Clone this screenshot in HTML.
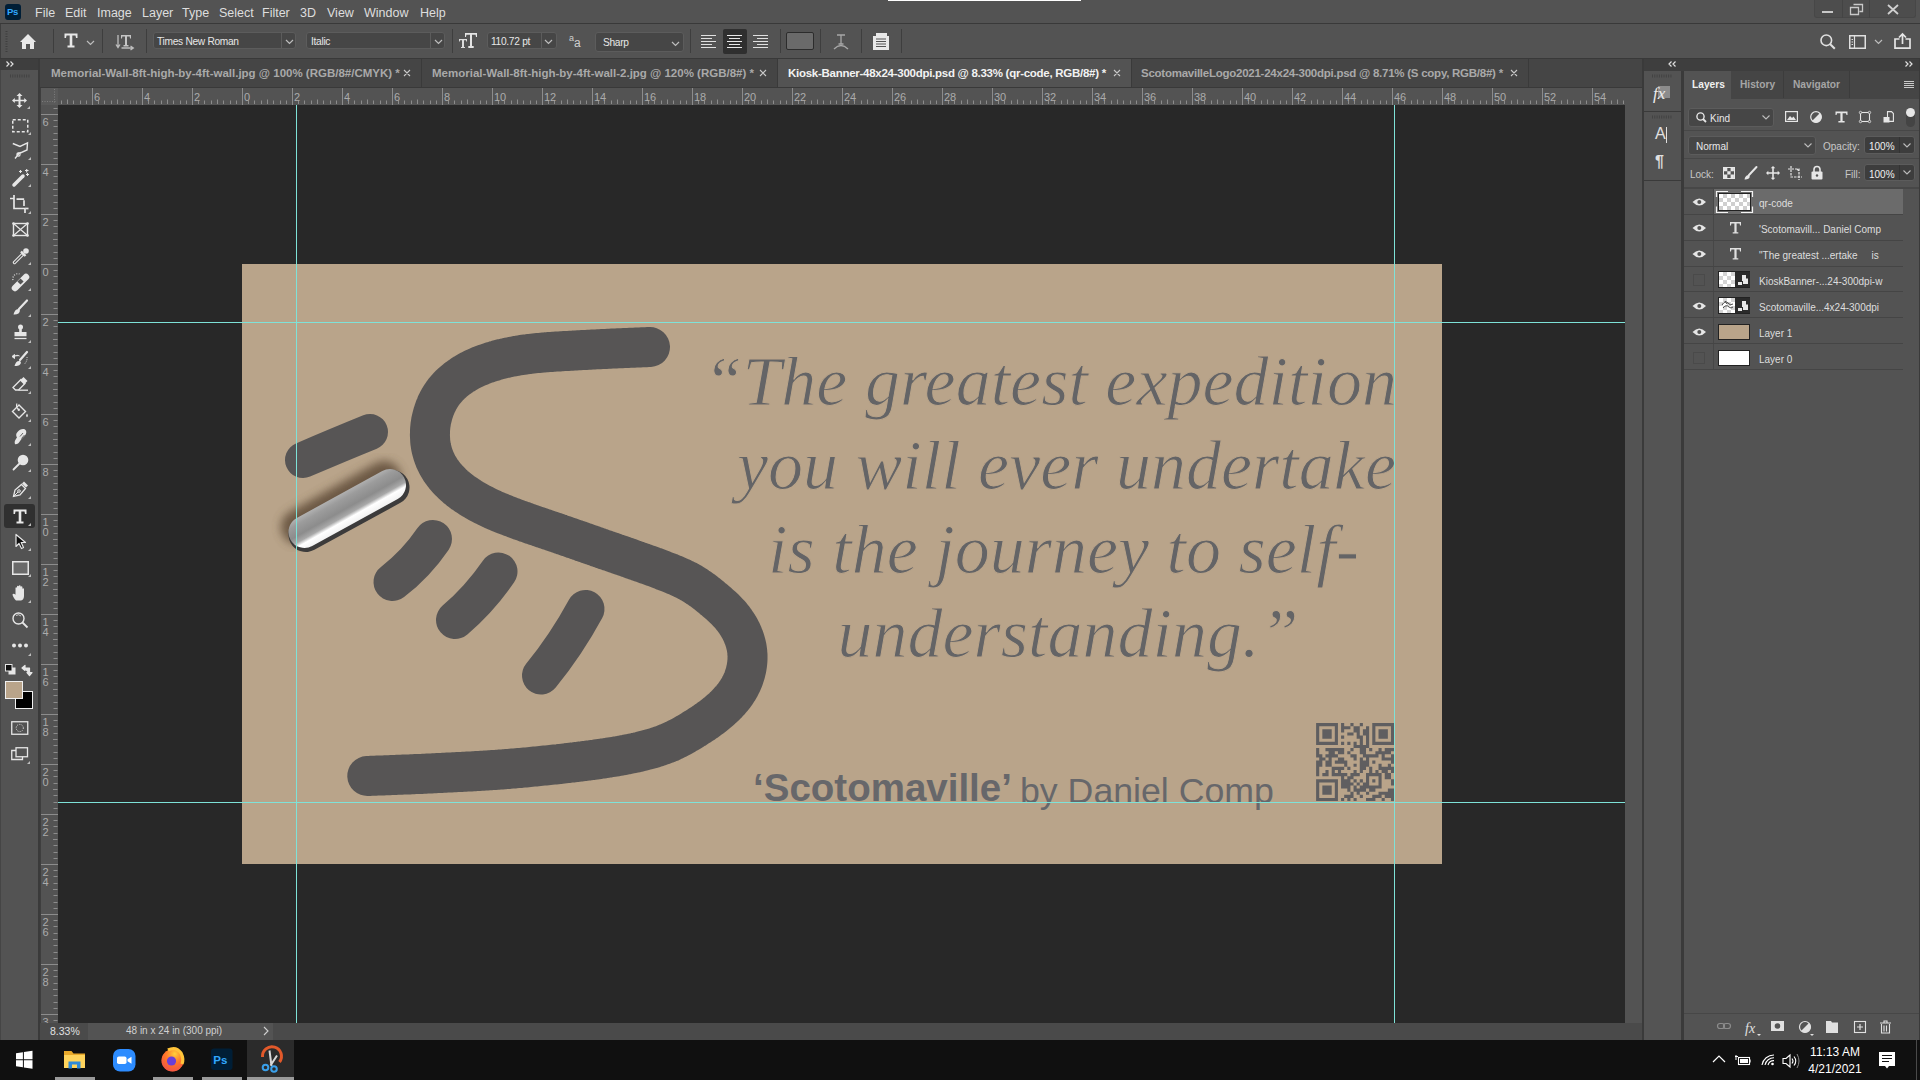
<!DOCTYPE html>
<html><head><meta charset="utf-8">
<style>
*{margin:0;padding:0;box-sizing:border-box}
html,body{width:1920px;height:1080px;overflow:hidden;background:#535353;font-family:"Liberation Sans",sans-serif;color:#d8d8d8;position:relative}
.a{position:absolute}
svg{position:absolute;overflow:visible}
.menu span{position:absolute;top:6px;font-size:12.5px;color:#dedede;white-space:nowrap}
.sep{position:absolute;width:1px;background:#3e3e3e}
.box{position:absolute;background:#464646;border:1px solid #5c5c5c;border-radius:3px}
.otxt{font-size:10.2px;color:#e6e6e6;white-space:nowrap;letter-spacing:-0.3px}
.tab{position:absolute;top:59px;height:28px;font-size:11.5px;font-weight:bold;white-space:nowrap}
.tab span{position:absolute;top:7.7px}
.ptab{top:79px;font-size:10.2px;font-weight:bold;white-space:nowrap}
.ptxt{font-size:10px;white-space:nowrap}
.lname{font-size:10px;color:#dedede;white-space:nowrap}
.quote{font-family:"Liberation Serif",serif;font-style:italic;font-size:70px;line-height:84px;color:#646466;white-space:nowrap;-webkit-text-stroke:1px #b9a48a}
.byline{font-family:"Liberation Sans",sans-serif;font-size:37px;line-height:48px;color:#67676a;white-space:nowrap}
</style></head><body>
<!-- MENU BAR -->
<div class="a" style="left:0;top:0;width:1920px;height:23px;background:#535353"></div>
<div class="a" style="left:888px;top:0;width:193px;height:1px;background:#fff"></div>
<div class="a" style="left:0;top:23px;width:1920px;height:1px;background:#393939"></div>
<div class="a" style="left:5px;top:4px;width:16px;height:16px;background:#001e36;border-radius:3px"></div>
<div class="a" style="left:7px;top:6px;font-size:9.5px;font-weight:bold;color:#31a8ff;letter-spacing:-0.3px">Ps</div>
<div class="menu">
<span style="left:35px">File</span><span style="left:65px">Edit</span><span style="left:97px">Image</span><span style="left:142px">Layer</span><span style="left:182px">Type</span><span style="left:219px">Select</span><span style="left:262px">Filter</span><span style="left:300px">3D</span><span style="left:327px">View</span><span style="left:364px">Window</span><span style="left:420px">Help</span>
</div>
<!-- window controls -->
<div class="a" style="left:1814px;top:0;width:102px;height:18px;background:#4d4d4d;border:1px solid #474747;border-top:0;border-radius:0 0 3px 3px"></div>
<div class="a" style="left:1842px;top:0;width:1px;height:18px;background:#444"></div>
<div class="a" style="left:1869px;top:0;width:1px;height:18px;background:#444"></div>
<div class="a" style="left:1822px;top:11px;width:11px;height:2px;background:#c8c8c8"></div>
<svg style="left:1850px;top:4px" width="13" height="11"><path d="M3.5 0.5h9v7h-3M0.5 3.5h8v7h-8z" fill="none" stroke="#c8c8c8" stroke-width="1.3"/></svg>
<svg style="left:1887px;top:4px" width="12" height="11"><path d="M1 1L11 10M11 1L1 10" stroke="#d0d0d0" stroke-width="1.8"/></svg>

<!-- OPTIONS BAR -->
<div class="a" style="left:0;top:24px;width:1920px;height:34px;background:#535353"></div>
<div class="a" style="left:0;top:24px;width:1px;height:34px;background:#3e3e3e"></div>
<div class="a" style="left:0;top:58px;width:1920px;height:1px;background:#393939"></div>
<svg style="left:5px;top:31px" width="3" height="21"><path d="M1.5 0V21" stroke="#3e3e3e" stroke-width="2" stroke-dasharray="1 1.5"/></svg>
<div class="sep" style="left:53px;top:29px;height:24px"></div>
<div class="sep" style="left:102px;top:29px;height:24px"></div>
<div class="sep" style="left:146px;top:29px;height:24px"></div>
<div class="sep" style="left:452px;top:29px;height:24px"></div>
<div class="sep" style="left:690px;top:29px;height:24px"></div>
<div class="sep" style="left:780px;top:29px;height:24px"></div>
<div class="sep" style="left:820px;top:29px;height:24px"></div>
<div class="sep" style="left:861px;top:29px;height:24px"></div>
<div class="sep" style="left:901px;top:29px;height:24px"></div>
<!-- home -->
<svg style="left:20px;top:34px" width="16" height="15"><path d="M8 0L16 8H14V15H10V10H6V15H2V8H0Z" fill="#e8e8e8"/></svg>
<!-- T tool -->
<svg style="left:64px;top:33px" width="14" height="15"><path d="M0.5 0.5H13.5V5H12L11.5 2.5H8.3V12.6H10.5V14.5H3.5V12.6H5.7V2.5H2.5L2 5H0.5Z" fill="#e8e8e8"/></svg>
<svg style="left:86px;top:40px" width="9" height="6"><path d="M1 1L4.5 4.5L8 1" fill="none" stroke="#bdbdbd" stroke-width="1.2"/></svg>
<!-- orientation icon -->
<svg style="left:116px;top:34px" width="19" height="17"><path d="M2 1V13M0 10.5L2 13.5L4 10.5" fill="none" stroke="#bdbdbd" stroke-width="1.3"/><path d="M5 1H15V4.5H14L13.7 2.5H11V11H12.5V12.5H7.5V11H9V2.5H6.3L6 4.5H5Z" fill="#c4c4c4"/><path d="M5.5 14H17M14.5 12L17.3 14L14.5 16" fill="none" stroke="#bdbdbd" stroke-width="1.3"/></svg>
<!-- font family -->
<div class="box" style="left:153px;top:32px;width:143px;height:17px"></div>
<div class="a" style="left:281px;top:33px;width:1px;height:15px;background:#5c5c5c"></div>
<div class="a otxt" style="left:157px;top:36px">Times New Roman</div>
<svg style="left:285px;top:39px" width="9" height="6"><path d="M1 1L4.5 4.5L8 1" fill="none" stroke="#bdbdbd" stroke-width="1.2"/></svg>
<!-- style -->
<div class="box" style="left:306px;top:32px;width:139px;height:17px"></div>
<div class="a" style="left:430px;top:33px;width:1px;height:15px;background:#5c5c5c"></div>
<div class="a otxt" style="left:311px;top:36px">Italic</div>
<svg style="left:434px;top:39px" width="9" height="6"><path d="M1 1L4.5 4.5L8 1" fill="none" stroke="#bdbdbd" stroke-width="1.2"/></svg>
<!-- size icon -->
<svg style="left:459px;top:33px" width="18" height="15"><path d="M0 6H8V8.5H7.2L7 7.2H5V14H6V15H2V14H3V7.2H1L0.8 8.5H0Z" fill="#dcdcdc"/><path d="M6 0H18V4H17L16.6 1.8H13V13H14.7V15H9.3V13H11V1.8H7.4L7 4H6Z" fill="#e4e4e4"/></svg>
<div class="box" style="left:487px;top:32px;width:70px;height:17px"></div>
<div class="a" style="left:541px;top:33px;width:1px;height:15px;background:#5c5c5c"></div>
<div class="a otxt" style="left:491px;top:36px">110.72 pt</div>
<svg style="left:544px;top:39px" width="9" height="6"><path d="M1 1L4.5 4.5L8 1" fill="none" stroke="#bdbdbd" stroke-width="1.2"/></svg>
<!-- aa -->
<div class="a" style="left:569px;top:33px;font-size:9px;color:#cfcfcf">a</div>
<div class="a" style="left:574px;top:36px;font-size:12px;color:#cfcfcf">a</div>
<div class="box" style="left:595px;top:32px;width:89px;height:20px"></div>
<div class="a otxt" style="left:603px;top:37px">Sharp</div>
<svg style="left:671px;top:41px" width="9" height="6"><path d="M1 1L4.5 4.5L8 1" fill="none" stroke="#bdbdbd" stroke-width="1.2"/></svg>
<!-- align -->
<svg style="left:701px;top:35px" width="16" height="13"><path d="M0 0.5H15M0 3.5H11M0 6.5H15M0 9.5H11M0 12.5H15" stroke="#e0e0e0" stroke-width="1.2"/></svg>
<div class="a" style="left:723px;top:29px;width:24px;height:25px;background:#2f2f2f;border-radius:2px"></div>
<svg style="left:727px;top:35px" width="16" height="13"><path d="M0 0.5H15M2 3.5H13M0 6.5H15M2 9.5H13M0 12.5H15" stroke="#e8e8e8" stroke-width="1.2"/></svg>
<svg style="left:753px;top:35px" width="16" height="13"><path d="M0 0.5H15M4 3.5H15M0 6.5H15M4 9.5H15M0 12.5H15" stroke="#e0e0e0" stroke-width="1.2"/></svg>
<div class="a" style="left:786px;top:32px;width:28px;height:18px;background:#6a6a6a;border:1px solid #2c2c2c;border-radius:2px"></div>
<!-- warp -->
<svg style="left:833px;top:34px" width="16" height="16"><path d="M4 1H12M8 1V10M5.5 10H10.5" fill="none" stroke="#a8a8a8" stroke-width="1.3"/><path d="M1 15Q8 8 15 15" fill="none" stroke="#a8a8a8" stroke-width="1.3"/></svg>
<!-- panels icon -->
<svg style="left:873px;top:33px" width="17" height="17"><path d="M0 3H3V0H14V3H16V17H0Z" fill="#e8e8e8"/><path d="M3 6H13M3 8.5H13M3 11H13M3 13.5H13" stroke="#535353" stroke-width="1.1"/></svg>
<!-- right icons -->
<svg style="left:1820px;top:34px" width="16" height="16"><circle cx="6.3" cy="6.3" r="5.3" fill="none" stroke="#e0e0e0" stroke-width="1.6"/><path d="M10 10L14.8 14.8" stroke="#e0e0e0" stroke-width="2"/></svg>
<svg style="left:1849px;top:35px" width="17" height="14"><rect x="0.75" y="0.75" width="15.5" height="12.5" fill="none" stroke="#e0e0e0" stroke-width="1.5"/><path d="M5.5 1V13" stroke="#e0e0e0" stroke-width="1.2"/><path d="M2.5 4.5H4M2.5 7H4M2.5 9.5H4" stroke="#e0e0e0" stroke-width="1"/></svg>
<svg style="left:1874px;top:39px" width="9" height="6"><path d="M1 1L4.5 4.5L8 1" fill="none" stroke="#bdbdbd" stroke-width="1.2"/></svg>
<svg style="left:1894px;top:33px" width="17" height="16"><path d="M5.5 6H1V15.2H16V6H11.5" fill="none" stroke="#e6e6e6" stroke-width="1.7"/><path d="M8.5 11V1.5M5 4.5L8.5 1L12 4.5" fill="none" stroke="#e6e6e6" stroke-width="1.7"/></svg>
<!-- LEFT TOOLS -->
<div class="a" style="left:0;top:59px;width:38px;height:11px;background:#3e3e3e"></div>
<svg style="left:6px;top:61px" width="8" height="6"><path d="M0.5 0.5L3 3L0.5 5.5M4.5 0.5L7 3L4.5 5.5" fill="none" stroke="#e0e0e0" stroke-width="1.2"/></svg>
<div class="a" style="left:0;top:70px;width:38px;height:970px;background:#535353"></div>
<div class="a" style="left:0;top:70px;width:1px;height:970px;background:#454545"></div>
<div class="a" style="left:38px;top:59px;width:2px;height:981px;background:#3a3a3a"></div>
<svg style="left:10px;top:74px" width="20" height="4"><path d="M0 2H20" stroke="#434343" stroke-width="3" stroke-dasharray="1 1.3"/></svg>
<g>
<!-- move -->
<svg style="left:12px;top:93px" width="20" height="16"><path d="M7.5 0L10.5 3H8.5V6.8H12.2V5L15 7.5L12.2 10V8.2H8.5V12H10.5L7.5 15L4.5 12H6.5V8.2H2.8V10L0 7.5L2.8 5V6.8H6.5V3H4.5Z" fill="#e6e6e6"/><path d="M18 13V16H15Z" fill="#bdbdbd"/></svg>
<!-- marquee -->
<svg style="left:12px;top:119px" width="20" height="16"><rect x="0.75" y="0.75" width="15" height="12" fill="none" stroke="#e6e6e6" stroke-width="1.5" stroke-dasharray="3 2"/><path d="M19 13V16H16Z" fill="#bdbdbd"/></svg>
<!-- lasso -->
<svg style="left:12px;top:142px" width="20" height="18"><path d="M0.8 1.5L8 4.5L15.5 0.8L15 8L7 11.5L3 16.5M9 10.5L5 12" fill="none" stroke="#e6e6e6" stroke-width="1.4"/><circle cx="6.5" cy="12.5" r="1.6" fill="none" stroke="#e6e6e6" stroke-width="1.2"/><path d="M19 15V18H16Z" fill="#bdbdbd"/></svg>
<!-- wand -->
<svg style="left:12px;top:169px" width="20" height="18"><path d="M2 16L11 7" stroke="#e6e6e6" stroke-width="3.5" stroke-linecap="round"/><path d="M7 2.5H10M8.5 1V4M13 1.5H16.5M14.7 0V3.5M14 5.5H17M15.5 4V7" stroke="#e6e6e6" stroke-width="1.1"/><path d="M19 15V18H16Z" fill="#bdbdbd"/></svg>
<!-- crop -->
<svg style="left:10px;top:195px" width="22" height="19"><path d="M0 3.5H4.8M4 0V13.5H15V18M14 5.2V11M6.5 4.2H13.3V5" fill="none" stroke="#e6e6e6" stroke-width="1.7"/><path d="M15.5 13.5H18.5" stroke="#e6e6e6" stroke-width="1.7"/><path d="M21 16V19H18Z" fill="#bdbdbd"/></svg>
<!-- frame -->
<svg style="left:12px;top:222px" width="18" height="16"><rect x="1.5" y="1.5" width="14" height="12" fill="none" stroke="#e6e6e6" stroke-width="1.4"/><path d="M1.5 1.5L15.5 13.5M15.5 1.5L1.5 13.5" stroke="#e6e6e6" stroke-width="1.2"/><circle cx="1.5" cy="1.5" r="1.3" fill="#e6e6e6"/><circle cx="15.5" cy="1.5" r="1.3" fill="#e6e6e6"/><circle cx="1.5" cy="13.5" r="1.3" fill="#e6e6e6"/><circle cx="15.5" cy="13.5" r="1.3" fill="#e6e6e6"/></svg>
<!-- eyedropper -->
<svg style="left:12px;top:247px" width="20" height="18"><path d="M2.5 15.5L10.5 7.5" stroke="#e6e6e6" stroke-width="3.4" stroke-linecap="round"/><path d="M2.5 15.5L10 8" stroke="#535353" stroke-width="1.2" stroke-linecap="round"/><path d="M9 4.5L13.5 9" stroke="#e6e6e6" stroke-width="2.4"/><circle cx="14" cy="4" r="2.8" fill="#e6e6e6"/><path d="M19 15V18H16Z" fill="#bdbdbd"/></svg>
<!-- healing -->
<svg style="left:11px;top:272px" width="21" height="19"><path d="M4 16L15 5" stroke="#e6e6e6" stroke-width="6.5" stroke-linecap="round"/><rect x="7.3" y="7.3" width="4.4" height="4.4" fill="#535353" transform="rotate(45 9.5 9.5)"/><path d="M2 8A5 5 0 0 1 8.5 2" fill="none" stroke="#e6e6e6" stroke-width="1.2" stroke-dasharray="1 1.5"/><path d="M20 16V19H17Z" fill="#bdbdbd"/></svg>
<!-- brush -->
<svg style="left:12px;top:299px" width="20" height="18"><path d="M7 10L15 1.5" stroke="#e6e6e6" stroke-width="2.2" stroke-linecap="round"/><path d="M1.5 15.5C2.5 12 4 9.5 7 10C8.5 11 8 13 6.5 14.5C5 15.5 3 15.8 1.5 15.5Z" fill="#e6e6e6"/><path d="M19 15V18H16Z" fill="#bdbdbd"/></svg>
<!-- stamp -->
<svg style="left:12px;top:324px" width="20" height="19"><circle cx="8.5" cy="3" r="2.5" fill="#e6e6e6"/><path d="M7.2 4H9.8V8H14.5V12.2H2.5V8H7.2Z" fill="#e6e6e6"/><path d="M2.5 14.5H14.5" stroke="#e6e6e6" stroke-width="1.3"/><path d="M19 16V19H16Z" fill="#bdbdbd"/></svg>
<!-- history brush -->
<svg style="left:11px;top:350px" width="21" height="19"><path d="M9 10L16 2" stroke="#e6e6e6" stroke-width="2.2" stroke-linecap="round"/><path d="M3.5 16C4.5 12.5 6 10.5 9 11C10.5 12 10 14 8.5 15C7 16 5 16.2 3.5 16Z" fill="#e6e6e6"/><path d="M1 6.5L3.5 4.5V8.5ZM3 6.5C5 5 7 5 8.5 6" fill="#e6e6e6" stroke="#e6e6e6" stroke-width="1"/><path d="M16 7Q16.5 11 13.5 14" fill="none" stroke="#e6e6e6" stroke-width="1" stroke-dasharray="1 1.3"/><path d="M20 16V19H17Z" fill="#bdbdbd"/></svg>
<!-- eraser -->
<svg style="left:12px;top:377px" width="20" height="17"><path d="M1 10.5L9 2.5L13 6.5L6.5 13H3.5Z" fill="none" stroke="#e6e6e6" stroke-width="1.3"/><path d="M8 3.5L11.5 0L15.5 4L12 7.5Z" fill="#e6e6e6"/><path d="M6.5 13.2H16" stroke="#e6e6e6" stroke-width="1.3"/><path d="M19 14V17H16Z" fill="#bdbdbd"/></svg>
<!-- bucket -->
<svg style="left:11px;top:403px" width="21" height="19"><path d="M1.5 8.5L8 2L14.5 8.5L8 15Z" fill="none" stroke="#e6e6e6" stroke-width="1.4"/><path d="M6 0.5Q4.5 4 7.5 6.5" fill="none" stroke="#e6e6e6" stroke-width="1.1"/><circle cx="7.8" cy="6.8" r="1.2" fill="#e6e6e6"/><path d="M16 10.5Q17.8 13 16 14.2Q14.2 13 16 10.5Z" fill="#e6e6e6"/><path d="M20 16V19H17Z" fill="#bdbdbd"/></svg>
<!-- smudge -->
<svg style="left:12px;top:428px" width="20" height="18"><path d="M3 16C2 13 4 11 5 9.5C4 8 3.5 6 5.5 4C7.5 1.5 10.5 0.5 13 1.5C15 3 14.5 5.5 13 7.5L9.5 11L7 14.5C6 16 4 16.5 3 16Z" fill="#e6e6e6"/><path d="M8 8.5L11 5M9.5 10.5L12.5 7" stroke="#535353" stroke-width="0.9"/><path d="M19 15V18H16Z" fill="#bdbdbd"/></svg>
<!-- dodge -->
<svg style="left:12px;top:454px" width="20" height="18"><circle cx="11" cy="6" r="5.3" fill="#e6e6e6"/><path d="M7.5 9.5L1.5 15.5" stroke="#e6e6e6" stroke-width="1.8" stroke-linecap="round"/><path d="M19 15V18H16Z" fill="#bdbdbd"/></svg>
<!-- pen -->
<svg style="left:12px;top:481px" width="20" height="18"><path d="M1.5 15.5L3 9L9.5 3.5L13.5 7.5L8 14Z" fill="none" stroke="#e6e6e6" stroke-width="1.3"/><path d="M10 2.5L12 0.5L16 4.5L14 6.5Z" fill="#e6e6e6"/><circle cx="7" cy="10" r="1.3" fill="none" stroke="#e6e6e6" stroke-width="1"/><path d="M1.5 15.5L6 11" stroke="#e6e6e6" stroke-width="1"/><path d="M19 15V18H16Z" fill="#bdbdbd"/></svg>
<!-- type selected -->
<div class="a" style="left:4px;top:504px;width:31px;height:24px;background:#303030;border-radius:3px"></div>
<svg style="left:13px;top:509px" width="19" height="17"><path d="M0.5 0.5H13.5V5H12L11.5 2.5H8.3V12.6H10.5V14.5H3.5V12.6H5.7V2.5H2.5L2 5H0.5Z" fill="#e8e8e8"/><path d="M18 14V17H15Z" fill="#bdbdbd"/></svg>
<!-- path select -->
<svg style="left:15px;top:534px" width="17" height="17"><path d="M1 0.5V12.5L4 9.5L6.5 14.5L8.5 13.5L6.2 8.5H10.5Z" fill="#111" stroke="#e6e6e6" stroke-width="1.2" stroke-linejoin="round"/><path d="M16 14V17H13Z" fill="#bdbdbd"/></svg>
<!-- rect -->
<svg style="left:12px;top:561px" width="20" height="16"><rect x="0.75" y="0.75" width="15.5" height="12.5" fill="#6a6a6a" stroke="#e6e6e6" stroke-width="1.5"/><path d="M19 13V16H16Z" fill="#bdbdbd"/></svg>
<!-- hand -->
<svg style="left:12px;top:585px" width="20" height="18"><path d="M4 15.5C2.5 14 0.5 11 0.5 9.5C1 8.5 2.2 8.5 3.5 9.8V3C3.5 2 5 2 5 3V8V1.5C5 0.5 6.8 0.5 6.8 1.5V8V1C6.8 0 8.6 0 8.6 1V8V2C8.6 1 10.4 1 10.4 2V8V4C10.4 3 12 3 12 4V11C12 13 11 15.5 9 15.5Z" fill="#e6e6e6"/><path d="M19 15V18H16Z" fill="#bdbdbd"/></svg>
<!-- zoom -->
<svg style="left:12px;top:612px" width="18" height="17"><circle cx="6.5" cy="6.5" r="5.5" fill="none" stroke="#e6e6e6" stroke-width="1.4"/><path d="M10.5 10.5L15.5 15.5" stroke="#e6e6e6" stroke-width="1.8"/><path d="M4 3.5A4 4 0 0 1 9 4" fill="none" stroke="#e6e6e6" stroke-width="0.8"/></svg>
<!-- more -->
<svg style="left:12px;top:642px" width="20" height="14"><circle cx="2" cy="3.5" r="2" fill="#e6e6e6"/><circle cx="8" cy="3.5" r="2" fill="#e6e6e6"/><circle cx="14" cy="3.5" r="2" fill="#e6e6e6"/><path d="M19 11V14H16Z" fill="#bdbdbd"/></svg>
<!-- default colors / swap -->
<svg style="left:5px;top:664px" width="11" height="11"><rect x="3.5" y="3.5" width="7" height="7" fill="#e6e6e6"/><rect x="0.5" y="0.5" width="6.5" height="6.5" fill="#111" stroke="#e6e6e6" stroke-width="1"/></svg>
<svg style="left:22px;top:664px" width="11" height="12"><path d="M1.5 4H7.5V10M0 4L3 1.5V6.5ZM7.5 11.5L5 8.5H10Z" fill="#e6e6e6" stroke="#e6e6e6" stroke-width="1.2" stroke-linejoin="round"/></svg>
<div class="a" style="left:15px;top:691px;width:18px;height:18px;background:#000;border:1.5px solid #f0f0f0"></div>
<div class="a" style="left:5px;top:681px;width:18px;height:18px;background:#b9a48a;border:1.5px solid #f0f0f0"></div>
<svg style="left:11px;top:721px" width="18" height="14"><rect x="0.75" y="0.75" width="16" height="12.5" fill="none" stroke="#e6e6e6" stroke-width="1.3"/><circle cx="8.75" cy="7" r="3.6" fill="none" stroke="#e6e6e6" stroke-width="1" stroke-dasharray="1 1.3"/></svg>
<svg style="left:11px;top:747px" width="20" height="17"><rect x="5" y="0.75" width="11.5" height="9" fill="none" stroke="#e6e6e6" stroke-width="1.3"/><path d="M5 3.5H0.75V12.5H11.5V9.75" fill="none" stroke="#e6e6e6" stroke-width="1.3"/><path d="M19 14V17H16Z" fill="#bdbdbd"/></svg>
</g>
<!-- TAB BAR -->
<div class="a" style="left:40px;top:59px;width:1603px;height:28px;background:#454545"></div>
<div class="a" style="left:40px;top:87px;width:1603px;height:1px;background:#393939"></div>
<div class="a" style="left:777px;top:59px;width:354px;height:28px;background:#535353"></div>
<div class="a" style="left:421px;top:59px;width:1px;height:28px;background:#3a3a3a"></div>
<div class="a" style="left:777px;top:59px;width:1px;height:28px;background:#3a3a3a"></div>
<div class="a" style="left:1131px;top:59px;width:1px;height:28px;background:#3a3a3a"></div>
<div class="a" style="left:1528px;top:59px;width:1px;height:28px;background:#3a3a3a"></div>
<div class="tab" style="left:51px;color:#a9a9a9"><span>Memorial-Wall-8ft-high-by-4ft-wall.jpg @ 100% (RGB/8#/CMYK) *</span></div>
<div class="tab" style="left:432px;color:#a9a9a9"><span>Memorial-Wall-8ft-high-by-4ft-wall-2.jpg @ 120% (RGB/8#) *</span></div>
<div class="tab" style="left:788px;color:#f2f2f2;letter-spacing:-0.27px"><span>Kiosk-Banner-48x24-300dpi.psd @ 8.33% (qr-code, RGB/8#) *</span></div>
<div class="tab" style="left:1141px;color:#a9a9a9;letter-spacing:-0.25px"><span>ScotomavilleLogo2021-24x24-300dpi.psd @ 8.71% (S copy, RGB/8#) *</span></div>
<svg style="left:0;top:0" width="1920" height="100"><path d="M404 70L410 76M410 70L404 76M760 70L766 76M766 70L760 76M1114 70L1120 76M1120 70L1114 76M1511 70L1517 76M1517 70L1511 76" stroke="#c8c8c8" stroke-width="1.1"/></svg>

<!-- RULERS -->
<div class="a" style="left:40px;top:88px;width:1585px;height:17px;background:#535353"></div>
<div class="a" style="left:40px;top:105px;width:18px;height:918px;background:#535353"></div>
<div class="a" style="left:40px;top:88px;width:1px;height:935px;background:#3e3e3e"></div>
<div class="a" style="left:41px;top:88px;width:17px;height:17px;background:#5a5a5a"></div>
<svg style="left:41px;top:88px" width="17" height="17"><path d="M1 13.5H16M13.5 1V16" stroke="#7c7c7c" stroke-width="1" stroke-dasharray="1 1.5"/></svg>
<svg class="a" style="left:0;top:0" width="1920" height="1080"><path d="M61.5 100.5V104 M67.5 99.5V104 M73.5 100.5V104 M80.5 100.5V104 M86.5 100.5V104 M92.5 88V105 M98.5 100.5V104 M104.5 100.5V104 M111.5 100.5V104 M117.5 99.5V104 M123.5 100.5V104 M130.5 100.5V104 M136.5 100.5V104 M142.5 88V105 M148.5 100.5V104 M154.5 100.5V104 M161.5 100.5V104 M167.5 99.5V104 M173.5 100.5V104 M180.5 100.5V104 M186.5 100.5V104 M192.5 88V105 M198.5 100.5V104 M204.5 100.5V104 M211.5 100.5V104 M217.5 99.5V104 M223.5 100.5V104 M230.5 100.5V104 M236.5 100.5V104 M242.5 88V105 M248.5 100.5V104 M254.5 100.5V104 M261.5 100.5V104 M267.5 99.5V104 M273.5 100.5V104 M280.5 100.5V104 M286.5 100.5V104 M292.5 88V105 M298.5 100.5V104 M304.5 100.5V104 M311.5 100.5V104 M317.5 99.5V104 M323.5 100.5V104 M330.5 100.5V104 M336.5 100.5V104 M342.5 88V105 M348.5 100.5V104 M354.5 100.5V104 M361.5 100.5V104 M367.5 99.5V104 M373.5 100.5V104 M380.5 100.5V104 M386.5 100.5V104 M392.5 88V105 M398.5 100.5V104 M404.5 100.5V104 M411.5 100.5V104 M417.5 99.5V104 M423.5 100.5V104 M430.5 100.5V104 M436.5 100.5V104 M442.5 88V105 M448.5 100.5V104 M454.5 100.5V104 M461.5 100.5V104 M467.5 99.5V104 M473.5 100.5V104 M480.5 100.5V104 M486.5 100.5V104 M492.5 88V105 M498.5 100.5V104 M504.5 100.5V104 M511.5 100.5V104 M517.5 99.5V104 M523.5 100.5V104 M530.5 100.5V104 M536.5 100.5V104 M542.5 88V105 M548.5 100.5V104 M554.5 100.5V104 M561.5 100.5V104 M567.5 99.5V104 M573.5 100.5V104 M580.5 100.5V104 M586.5 100.5V104 M592.5 88V105 M598.5 100.5V104 M604.5 100.5V104 M611.5 100.5V104 M617.5 99.5V104 M623.5 100.5V104 M630.5 100.5V104 M636.5 100.5V104 M642.5 88V105 M648.5 100.5V104 M654.5 100.5V104 M661.5 100.5V104 M667.5 99.5V104 M673.5 100.5V104 M680.5 100.5V104 M686.5 100.5V104 M692.5 88V105 M698.5 100.5V104 M704.5 100.5V104 M711.5 100.5V104 M717.5 99.5V104 M723.5 100.5V104 M730.5 100.5V104 M736.5 100.5V104 M742.5 88V105 M748.5 100.5V104 M754.5 100.5V104 M761.5 100.5V104 M767.5 99.5V104 M773.5 100.5V104 M780.5 100.5V104 M786.5 100.5V104 M792.5 88V105 M798.5 100.5V104 M804.5 100.5V104 M811.5 100.5V104 M817.5 99.5V104 M823.5 100.5V104 M830.5 100.5V104 M836.5 100.5V104 M842.5 88V105 M848.5 100.5V104 M854.5 100.5V104 M861.5 100.5V104 M867.5 99.5V104 M873.5 100.5V104 M880.5 100.5V104 M886.5 100.5V104 M892.5 88V105 M898.5 100.5V104 M904.5 100.5V104 M911.5 100.5V104 M917.5 99.5V104 M923.5 100.5V104 M930.5 100.5V104 M936.5 100.5V104 M942.5 88V105 M948.5 100.5V104 M954.5 100.5V104 M961.5 100.5V104 M967.5 99.5V104 M973.5 100.5V104 M980.5 100.5V104 M986.5 100.5V104 M992.5 88V105 M998.5 100.5V104 M1004.5 100.5V104 M1011.5 100.5V104 M1017.5 99.5V104 M1023.5 100.5V104 M1030.5 100.5V104 M1036.5 100.5V104 M1042.5 88V105 M1048.5 100.5V104 M1054.5 100.5V104 M1061.5 100.5V104 M1067.5 99.5V104 M1073.5 100.5V104 M1080.5 100.5V104 M1086.5 100.5V104 M1092.5 88V105 M1098.5 100.5V104 M1104.5 100.5V104 M1111.5 100.5V104 M1117.5 99.5V104 M1123.5 100.5V104 M1130.5 100.5V104 M1136.5 100.5V104 M1142.5 88V105 M1148.5 100.5V104 M1154.5 100.5V104 M1161.5 100.5V104 M1167.5 99.5V104 M1173.5 100.5V104 M1180.5 100.5V104 M1186.5 100.5V104 M1192.5 88V105 M1198.5 100.5V104 M1204.5 100.5V104 M1211.5 100.5V104 M1217.5 99.5V104 M1223.5 100.5V104 M1230.5 100.5V104 M1236.5 100.5V104 M1242.5 88V105 M1248.5 100.5V104 M1254.5 100.5V104 M1261.5 100.5V104 M1267.5 99.5V104 M1273.5 100.5V104 M1280.5 100.5V104 M1286.5 100.5V104 M1292.5 88V105 M1298.5 100.5V104 M1304.5 100.5V104 M1311.5 100.5V104 M1317.5 99.5V104 M1323.5 100.5V104 M1330.5 100.5V104 M1336.5 100.5V104 M1342.5 88V105 M1348.5 100.5V104 M1354.5 100.5V104 M1361.5 100.5V104 M1367.5 99.5V104 M1373.5 100.5V104 M1380.5 100.5V104 M1386.5 100.5V104 M1392.5 88V105 M1398.5 100.5V104 M1404.5 100.5V104 M1411.5 100.5V104 M1417.5 99.5V104 M1423.5 100.5V104 M1430.5 100.5V104 M1436.5 100.5V104 M1442.5 88V105 M1448.5 100.5V104 M1454.5 100.5V104 M1461.5 100.5V104 M1467.5 99.5V104 M1473.5 100.5V104 M1480.5 100.5V104 M1486.5 100.5V104 M1492.5 88V105 M1498.5 100.5V104 M1504.5 100.5V104 M1511.5 100.5V104 M1517.5 99.5V104 M1523.5 100.5V104 M1530.5 100.5V104 M1536.5 100.5V104 M1542.5 88V105 M1548.5 100.5V104 M1554.5 100.5V104 M1561.5 100.5V104 M1567.5 99.5V104 M1573.5 100.5V104 M1580.5 100.5V104 M1586.5 100.5V104 M1592.5 88V105 M1598.5 100.5V104 M1604.5 100.5V104 M1611.5 100.5V104 M1617.5 99.5V104 M1623.5 100.5V104" stroke="#8c8c8c" stroke-width="1"/><g fill="#ababab" font-size="11" font-family="Liberation Sans"><text x="94" y="101.3">6</text><text x="144" y="101.3">4</text><text x="194" y="101.3">2</text><text x="244" y="101.3">0</text><text x="294" y="101.3">2</text><text x="344" y="101.3">4</text><text x="394" y="101.3">6</text><text x="444" y="101.3">8</text><text x="494" y="101.3">10</text><text x="544" y="101.3">12</text><text x="594" y="101.3">14</text><text x="644" y="101.3">16</text><text x="694" y="101.3">18</text><text x="744" y="101.3">20</text><text x="794" y="101.3">22</text><text x="844" y="101.3">24</text><text x="894" y="101.3">26</text><text x="944" y="101.3">28</text><text x="994" y="101.3">30</text><text x="1044" y="101.3">32</text><text x="1094" y="101.3">34</text><text x="1144" y="101.3">36</text><text x="1194" y="101.3">38</text><text x="1244" y="101.3">40</text><text x="1294" y="101.3">42</text><text x="1344" y="101.3">44</text><text x="1394" y="101.3">46</text><text x="1444" y="101.3">48</text><text x="1494" y="101.3">50</text><text x="1544" y="101.3">52</text><text x="1594" y="101.3">54</text></g></svg><svg class="a" style="left:0;top:0" width="1920" height="1080"><path d="M53.5 108.5H57.5 M41 114.5H58 M53.5 120.5H57.5 M53.5 126.5H57.5 M53.5 133.5H57.5 M53 139.5H57.5 M53.5 145.5H57.5 M53.5 152.5H57.5 M53.5 158.5H57.5 M41 164.5H58 M53.5 170.5H57.5 M53.5 176.5H57.5 M53.5 183.5H57.5 M53 189.5H57.5 M53.5 195.5H57.5 M53.5 202.5H57.5 M53.5 208.5H57.5 M41 214.5H58 M53.5 220.5H57.5 M53.5 226.5H57.5 M53.5 233.5H57.5 M53 239.5H57.5 M53.5 245.5H57.5 M53.5 252.5H57.5 M53.5 258.5H57.5 M41 264.5H58 M53.5 270.5H57.5 M53.5 276.5H57.5 M53.5 283.5H57.5 M53 289.5H57.5 M53.5 295.5H57.5 M53.5 302.5H57.5 M53.5 308.5H57.5 M41 314.5H58 M53.5 320.5H57.5 M53.5 326.5H57.5 M53.5 333.5H57.5 M53 339.5H57.5 M53.5 345.5H57.5 M53.5 352.5H57.5 M53.5 358.5H57.5 M41 364.5H58 M53.5 370.5H57.5 M53.5 376.5H57.5 M53.5 383.5H57.5 M53 389.5H57.5 M53.5 395.5H57.5 M53.5 402.5H57.5 M53.5 408.5H57.5 M41 414.5H58 M53.5 420.5H57.5 M53.5 426.5H57.5 M53.5 433.5H57.5 M53 439.5H57.5 M53.5 445.5H57.5 M53.5 452.5H57.5 M53.5 458.5H57.5 M41 464.5H58 M53.5 470.5H57.5 M53.5 476.5H57.5 M53.5 483.5H57.5 M53 489.5H57.5 M53.5 495.5H57.5 M53.5 502.5H57.5 M53.5 508.5H57.5 M41 514.5H58 M53.5 520.5H57.5 M53.5 526.5H57.5 M53.5 533.5H57.5 M53 539.5H57.5 M53.5 545.5H57.5 M53.5 552.5H57.5 M53.5 558.5H57.5 M41 564.5H58 M53.5 570.5H57.5 M53.5 576.5H57.5 M53.5 583.5H57.5 M53 589.5H57.5 M53.5 595.5H57.5 M53.5 602.5H57.5 M53.5 608.5H57.5 M41 614.5H58 M53.5 620.5H57.5 M53.5 626.5H57.5 M53.5 633.5H57.5 M53 639.5H57.5 M53.5 645.5H57.5 M53.5 652.5H57.5 M53.5 658.5H57.5 M41 664.5H58 M53.5 670.5H57.5 M53.5 676.5H57.5 M53.5 683.5H57.5 M53 689.5H57.5 M53.5 695.5H57.5 M53.5 702.5H57.5 M53.5 708.5H57.5 M41 714.5H58 M53.5 720.5H57.5 M53.5 726.5H57.5 M53.5 733.5H57.5 M53 739.5H57.5 M53.5 745.5H57.5 M53.5 752.5H57.5 M53.5 758.5H57.5 M41 764.5H58 M53.5 770.5H57.5 M53.5 776.5H57.5 M53.5 783.5H57.5 M53 789.5H57.5 M53.5 795.5H57.5 M53.5 802.5H57.5 M53.5 808.5H57.5 M41 814.5H58 M53.5 820.5H57.5 M53.5 826.5H57.5 M53.5 833.5H57.5 M53 839.5H57.5 M53.5 845.5H57.5 M53.5 852.5H57.5 M53.5 858.5H57.5 M41 864.5H58 M53.5 870.5H57.5 M53.5 876.5H57.5 M53.5 883.5H57.5 M53 889.5H57.5 M53.5 895.5H57.5 M53.5 902.5H57.5 M53.5 908.5H57.5 M41 914.5H58 M53.5 920.5H57.5 M53.5 926.5H57.5 M53.5 933.5H57.5 M53 939.5H57.5 M53.5 945.5H57.5 M53.5 952.5H57.5 M53.5 958.5H57.5 M41 964.5H58 M53.5 970.5H57.5 M53.5 976.5H57.5 M53.5 983.5H57.5 M53 989.5H57.5 M53.5 995.5H57.5 M53.5 1002.5H57.5 M53.5 1008.5H57.5 M41 1014.5H58 M53.5 1020.5H57.5" stroke="#8c8c8c" stroke-width="1"/><g fill="#ababab" font-size="11" font-family="Liberation Sans"><text x="42.5" y="125.5">6</text><text x="42.5" y="175.5">4</text><text x="42.5" y="225.5">2</text><text x="42.5" y="275.5">0</text><text x="42.5" y="325.5">2</text><text x="42.5" y="375.5">4</text><text x="42.5" y="425.5">6</text><text x="42.5" y="475.5">8</text><text x="42.5" y="525.5">1</text><text x="42.5" y="536.0">0</text><text x="42.5" y="575.5">1</text><text x="42.5" y="586.0">2</text><text x="42.5" y="625.5">1</text><text x="42.5" y="636.0">4</text><text x="42.5" y="675.5">1</text><text x="42.5" y="686.0">6</text><text x="42.5" y="725.5">1</text><text x="42.5" y="736.0">8</text><text x="42.5" y="775.5">2</text><text x="42.5" y="786.0">0</text><text x="42.5" y="825.5">2</text><text x="42.5" y="836.0">2</text><text x="42.5" y="875.5">2</text><text x="42.5" y="886.0">4</text><text x="42.5" y="925.5">2</text><text x="42.5" y="936.0">6</text><text x="42.5" y="975.5">2</text><text x="42.5" y="986.0">8</text><text x="42.5" y="1025.5">3</text><text x="42.5" y="1036.0">0</text></g></svg>
<!-- CANVAS -->
<div class="a" style="left:58px;top:105px;width:1567px;height:918px;background:#282828"></div>
<div class="a" style="left:1625px;top:88px;width:17px;height:935px;background:#535353"></div>

<!-- STATUS BAR -->
<div class="a" style="left:40px;top:1023px;width:1602px;height:17px;background:#4a4a4a"></div>
<div class="a" style="left:88px;top:1023px;width:185px;height:17px;background:#535353"></div>
<div class="a" style="left:50px;top:1025px;font-size:10.5px;color:#e0e0e0">8.33%</div>
<div class="a" style="left:126px;top:1025px;font-size:10px;color:#d0d0d0">48 in x 24 in (300 ppi)</div>
<svg style="left:263px;top:1026px" width="6" height="10"><path d="M1 1L5 5L1 9" fill="none" stroke="#d0d0d0" stroke-width="1.1"/></svg>
<!-- BANNER -->
<div class="a" style="left:242px;top:264px;width:1200px;height:600px;background:#b9a48a"></div>
<svg style="left:0;top:0" width="1920" height="1080">
<defs>
<linearGradient id="silver" x1="0" y1="0" x2="0.25" y2="1">
<stop offset="0" stop-color="#7a7a7a"/><stop offset="0.35" stop-color="#cfcfcf"/><stop offset="0.55" stop-color="#9a9a9a"/><stop offset="0.8" stop-color="#ffffff"/><stop offset="1" stop-color="#f5f5f5"/>
</linearGradient>
<filter id="blur4" x="-50%" y="-50%" width="200%" height="200%"><feGaussianBlur stdDeviation="5"/></filter>
</defs>
<g fill="none" stroke="#575555" stroke-linecap="round" stroke-linejoin="round">
<path d="M650.0 347.0 L648.0 347.1 L646.0 347.2 L644.0 347.2 L642.0 347.3 L640.0 347.4 L638.0 347.5 L636.0 347.6 L634.0 347.7 L632.0 347.7 L630.0 347.8 L628.0 347.9 L626.0 348.0 L624.0 348.1 L622.0 348.2 L620.0 348.2 L618.0 348.3 L616.0 348.4 L614.0 348.5 L612.0 348.6 L610.0 348.7 L608.0 348.8 L606.0 348.9 L604.0 349.0 L602.0 349.1 L600.0 349.2 L598.0 349.3 L596.1 349.4 L594.1 349.5 L592.1 349.6 L590.1 349.7 L588.1 349.8 L586.1 349.9 L584.1 350.0 L582.1 350.1 L580.1 350.2 L578.1 350.3 L576.1 350.4 L574.1 350.6 L572.1 350.7 L570.1 350.8 L568.1 350.9 L566.1 351.0 L564.1 351.1 L562.1 351.2 L560.1 351.4 L558.1 351.5 L556.1 351.6 L554.1 351.7 L552.1 351.9 L550.1 352.0 L548.1 352.1 L546.1 352.3 L544.1 352.4 L542.2 352.6 L540.2 352.8 L538.2 353.0 L536.2 353.2 L534.2 353.4 L532.2 353.6 L530.2 353.8 L528.2 354.1 L526.3 354.3 L524.3 354.6 L522.3 354.9 L520.3 355.2 L518.4 355.5 L516.4 355.9 L514.4 356.2 L512.5 356.6 L510.5 357.0 L508.5 357.4 L506.6 357.8 L504.6 358.3 L502.7 358.7 L500.8 359.2 L498.8 359.7 L496.9 360.2 L495.0 360.8 L493.1 361.3 L491.2 361.9 L489.3 362.5 L487.4 363.2 L485.5 363.8 L483.6 364.5 L481.8 365.2 L479.9 366.0 L478.1 366.7 L476.3 367.5 L474.4 368.4 L472.7 369.2 L470.9 370.1 L469.1 371.1 L467.4 372.0 L465.7 373.0 L464.0 374.1 L462.3 375.1 L460.6 376.2 L459.0 377.4 L457.4 378.6 L455.8 379.8 L454.3 381.0 L452.8 382.3 L451.3 383.6 L449.9 385.0 L448.5 386.4 L447.2 387.8 L445.9 389.3 L444.6 390.8 L443.4 392.4 L442.3 394.0 L441.2 395.6 L440.1 397.3 L439.1 399.0 L438.2 400.7 L437.3 402.5 L436.4 404.3 L435.7 406.1 L434.9 407.9 L434.2 409.8 L433.6 411.7 L433.0 413.5 L432.5 415.4 L432.0 417.4 L431.5 419.3 L431.1 421.2 L430.8 423.2 L430.5 425.1 L430.3 427.1 L430.1 429.1 L430.0 431.0 L430.0 433.0 L429.9 435.0 L430.0 437.0 L430.1 438.9 L430.2 440.9 L430.4 442.9 L430.7 444.8 L431.0 446.8 L431.4 448.7 L431.9 450.6 L432.4 452.5 L433.0 454.4 L433.6 456.3 L434.3 458.1 L435.0 459.9 L435.9 461.7 L436.7 463.5 L437.6 465.2 L438.6 466.9 L439.7 468.6 L440.7 470.3 L441.9 471.9 L443.0 473.5 L444.2 475.1 L445.5 476.6 L446.8 478.1 L448.1 479.6 L449.5 481.0 L450.9 482.4 L452.3 483.8 L453.7 485.2 L455.2 486.5 L456.7 487.8 L458.3 489.0 L459.8 490.3 L461.4 491.5 L463.0 492.7 L464.7 493.8 L466.3 494.9 L468.0 496.0 L469.6 497.1 L471.3 498.2 L473.0 499.2 L474.7 500.3 L476.5 501.3 L478.2 502.2 L480.0 503.2 L481.7 504.1 L483.5 505.0 L485.3 505.9 L487.1 506.8 L488.9 507.7 L490.7 508.5 L492.5 509.4 L494.3 510.2 L496.2 511.0 L498.0 511.8 L499.8 512.5 L501.7 513.3 L503.5 514.0 L505.4 514.8 L507.3 515.5 L509.1 516.2 L511.0 516.9 L512.9 517.6 L514.7 518.3 L516.6 519.0 L518.5 519.7 L520.4 520.4 L522.3 521.0 L524.1 521.7 L526.0 522.4 L527.9 523.0 L529.8 523.7 L531.7 524.4 L533.6 525.0 L535.5 525.7 L537.4 526.3 L539.3 527.0 L541.2 527.6 L543.0 528.3 L544.9 528.9 L546.8 529.5 L548.7 530.2 L550.6 530.8 L552.5 531.5 L554.4 532.1 L556.3 532.8 L558.2 533.4 L560.1 534.1 L562.0 534.7 L563.9 535.4 L565.7 536.0 L567.6 536.7 L569.5 537.3 L571.4 538.0 L573.3 538.7 L575.2 539.3 L577.1 540.0 L579.0 540.6 L580.9 541.3 L582.7 542.0 L584.6 542.6 L586.5 543.3 L588.4 544.0 L590.3 544.6 L592.2 545.3 L594.1 545.9 L596.0 546.6 L597.8 547.3 L599.7 547.9 L601.6 548.6 L603.5 549.2 L605.4 549.9 L607.3 550.5 L609.2 551.2 L611.1 551.8 L613.0 552.5 L614.8 553.2 L616.7 553.8 L618.6 554.5 L620.5 555.1 L622.4 555.8 L624.3 556.4 L626.2 557.1 L628.1 557.8 L630.0 558.4 L631.8 559.1 L633.7 559.7 L635.6 560.4 L637.5 561.1 L639.4 561.7 L641.3 562.4 L643.2 563.1 L645.0 563.7 L646.9 564.4 L648.8 565.1 L650.7 565.8 L652.6 566.5 L654.4 567.1 L656.3 567.8 L658.2 568.5 L660.1 569.2 L661.9 569.9 L663.8 570.7 L665.7 571.4 L667.5 572.1 L669.4 572.8 L671.3 573.6 L673.1 574.3 L674.9 575.1 L676.8 575.9 L678.6 576.7 L680.4 577.5 L682.2 578.4 L684.0 579.2 L685.8 580.1 L687.6 581.0 L689.3 582.0 L691.1 582.9 L692.8 584.0 L694.5 585.0 L696.2 586.1 L697.8 587.2 L699.5 588.3 L701.1 589.4 L702.7 590.6 L704.3 591.8 L705.9 593.0 L707.4 594.2 L709.0 595.5 L710.6 596.7 L712.1 598.0 L713.6 599.3 L715.2 600.6 L716.7 601.9 L718.2 603.2 L719.7 604.5 L721.2 605.8 L722.7 607.1 L724.1 608.5 L725.5 609.9 L726.9 611.3 L728.3 612.8 L729.6 614.2 L730.9 615.7 L732.2 617.3 L733.4 618.8 L734.6 620.4 L735.7 622.0 L736.8 623.7 L737.9 625.3 L738.9 627.0 L739.9 628.8 L740.8 630.5 L741.7 632.3 L742.5 634.1 L743.2 635.9 L744.0 637.8 L744.6 639.6 L745.2 641.5 L745.7 643.4 L746.2 645.3 L746.6 647.2 L746.9 649.1 L747.2 651.1 L747.3 653.0 L747.5 655.0 L747.5 657.0 L747.5 658.9 L747.4 660.9 L747.2 662.9 L747.0 664.8 L746.7 666.8 L746.4 668.7 L745.9 670.6 L745.5 672.5 L744.9 674.4 L744.3 676.3 L743.7 678.2 L743.0 680.0 L742.2 681.8 L741.4 683.6 L740.5 685.4 L739.6 687.1 L738.6 688.8 L737.6 690.5 L736.5 692.2 L735.4 693.8 L734.2 695.4 L733.0 697.0 L731.8 698.5 L730.5 700.0 L729.1 701.5 L727.8 703.0 L726.4 704.4 L725.0 705.8 L723.6 707.2 L722.1 708.5 L720.6 709.9 L719.1 711.2 L717.6 712.5 L716.1 713.7 L714.5 715.0 L712.9 716.2 L711.3 717.4 L709.7 718.6 L708.1 719.8 L706.5 720.9 L704.8 722.0 L703.2 723.2 L701.5 724.3 L699.8 725.4 L698.2 726.4 L696.5 727.5 L694.8 728.6 L693.1 729.6 L691.4 730.7 L689.7 731.7 L688.0 732.7 L686.2 733.8 L684.5 734.7 L682.8 735.7 L681.0 736.7 L679.3 737.6 L677.5 738.5 L675.7 739.4 L673.9 740.3 L672.1 741.1 L670.3 742.0 L668.5 742.7 L666.6 743.5 L664.8 744.2 L662.9 744.9 L661.0 745.6 L659.1 746.3 L657.2 746.9 L655.3 747.5 L653.4 748.1 L651.5 748.7 L649.6 749.2 L647.7 749.7 L645.7 750.2 L643.8 750.7 L641.9 751.2 L639.9 751.7 L638.0 752.1 L636.0 752.6 L634.1 753.0 L632.1 753.4 L630.2 753.8 L628.2 754.2 L626.2 754.6 L624.3 754.9 L622.3 755.3 L620.3 755.7 L618.4 756.0 L616.4 756.4 L614.4 756.7 L612.5 757.0 L610.5 757.3 L608.5 757.6 L606.5 758.0 L604.5 758.3 L602.6 758.5 L600.6 758.8 L598.6 759.1 L596.6 759.4 L594.7 759.7 L592.7 760.0 L590.7 760.2 L588.7 760.5 L586.7 760.7 L584.7 761.0 L582.8 761.2 L580.8 761.5 L578.8 761.7 L576.8 762.0 L574.8 762.2 L572.8 762.5 L570.8 762.7 L568.9 762.9 L566.9 763.2 L564.9 763.4 L562.9 763.6 L560.9 763.8 L558.9 764.1 L556.9 764.3 L554.9 764.5 L553.0 764.7 L551.0 764.9 L549.0 765.1 L547.0 765.3 L545.0 765.5 L543.0 765.7 L541.0 765.9 L539.0 766.1 L537.0 766.3 L535.1 766.5 L533.1 766.7 L531.1 766.9 L529.1 767.1 L527.1 767.3 L525.1 767.5 L523.1 767.7 L521.1 767.9 L519.1 768.0 L517.1 768.2 L515.1 768.4 L513.1 768.5 L511.2 768.7 L509.2 768.9 L507.2 769.0 L505.2 769.2 L503.2 769.3 L501.2 769.5 L499.2 769.6 L497.2 769.8 L495.2 769.9 L493.2 770.0 L491.2 770.2 L489.2 770.3 L487.2 770.4 L485.2 770.6 L483.2 770.7 L481.2 770.8 L479.2 770.9 L477.2 771.0 L475.2 771.2 L473.2 771.3 L471.2 771.4 L469.2 771.5 L467.2 771.6 L465.3 771.7 L463.3 771.8 L461.3 771.9 L459.3 772.0 L457.3 772.1 L455.3 772.2 L453.3 772.3 L451.3 772.4 L449.3 772.5 L447.3 772.6 L445.3 772.7 L443.3 772.8 L441.3 772.9 L439.3 773.0 L437.3 773.1 L435.3 773.2 L433.3 773.3 L431.3 773.4 L429.3 773.5 L427.3 773.6 L425.3 773.7 L423.3 773.8 L421.3 773.9 L419.3 774.0 L417.3 774.0 L415.3 774.1 L413.3 774.2 L411.3 774.3 L409.3 774.4 L407.3 774.5 L405.3 774.5 L403.3 774.6 L401.3 774.7 L399.3 774.8 L397.3 774.8 L395.3 774.9 L393.3 775.0 L391.3 775.1 L389.3 775.2 L387.3 775.2 L385.3 775.3 L383.3 775.4 L381.3 775.5 L379.3 775.5 L377.3 775.6 L375.3 775.7 L373.3 775.8 L371.3 775.8 L369.3 775.9 L367.3 776.0" stroke-width="40"/>
<path d="M303 460 Q338 445 370 432" stroke-width="36"/>
<path d="M392.5 582 Q416 564 433 539" stroke-width="38"/>
<path d="M455 620 Q479.5 599 498.5 571.5" stroke-width="38"/>
<path d="M541 675.5 Q566 645 585.5 609" stroke-width="38"/>
</g>
<path d="M298 527 L384 478" stroke="#5e4c38" stroke-width="34" stroke-linecap="round" filter="url(#blur4)" opacity="0.85"/>
<path d="M306 534.5 L392 487.5" stroke="#3c3b3b" stroke-width="35" stroke-linecap="round"/>
<linearGradient id="silv2" gradientUnits="userSpaceOnUse" x1="338.5" y1="494" x2="354.5" y2="522.5">
<stop offset="0" stop-color="#b4b4b4"/><stop offset="0.2" stop-color="#9c9c9c"/><stop offset="0.5" stop-color="#8c8c8c"/><stop offset="0.68" stop-color="#a8a8a8"/><stop offset="0.8" stop-color="#ffffff"/><stop offset="1" stop-color="#f2f2f2"/>
</linearGradient>
<path d="M304.5 532 L390 485" stroke="url(#silv2)" stroke-width="32" stroke-linecap="round"/>
<path fill="#5f5e60" d="M1316.10 723.10h21.84v3.12h-21.84zM1341.06 723.10h3.12v3.12h-3.12zM1350.42 723.10h3.12v3.12h-3.12zM1359.78 723.10h3.12v3.12h-3.12zM1372.26 723.10h21.84v3.12h-21.84zM1316.10 726.22h3.12v3.12h-3.12zM1334.82 726.22h3.12v3.12h-3.12zM1341.06 726.22h9.36v3.12h-9.36zM1353.54 726.22h6.24v3.12h-6.24zM1366.02 726.22h3.12v3.12h-3.12zM1372.26 726.22h3.12v3.12h-3.12zM1390.98 726.22h3.12v3.12h-3.12zM1316.10 729.34h3.12v3.12h-3.12zM1322.34 729.34h9.36v3.12h-9.36zM1334.82 729.34h3.12v3.12h-3.12zM1341.06 729.34h3.12v3.12h-3.12zM1353.54 729.34h6.24v3.12h-6.24zM1362.90 729.34h6.24v3.12h-6.24zM1372.26 729.34h3.12v3.12h-3.12zM1378.50 729.34h9.36v3.12h-9.36zM1390.98 729.34h3.12v3.12h-3.12zM1316.10 732.46h3.12v3.12h-3.12zM1322.34 732.46h9.36v3.12h-9.36zM1334.82 732.46h3.12v3.12h-3.12zM1347.30 732.46h6.24v3.12h-6.24zM1356.66 732.46h3.12v3.12h-3.12zM1362.90 732.46h6.24v3.12h-6.24zM1372.26 732.46h3.12v3.12h-3.12zM1378.50 732.46h9.36v3.12h-9.36zM1390.98 732.46h3.12v3.12h-3.12zM1316.10 735.58h3.12v3.12h-3.12zM1322.34 735.58h9.36v3.12h-9.36zM1334.82 735.58h3.12v3.12h-3.12zM1341.06 735.58h3.12v3.12h-3.12zM1356.66 735.58h6.24v3.12h-6.24zM1366.02 735.58h3.12v3.12h-3.12zM1372.26 735.58h3.12v3.12h-3.12zM1378.50 735.58h9.36v3.12h-9.36zM1390.98 735.58h3.12v3.12h-3.12zM1316.10 738.70h3.12v3.12h-3.12zM1334.82 738.70h3.12v3.12h-3.12zM1359.78 738.70h3.12v3.12h-3.12zM1366.02 738.70h3.12v3.12h-3.12zM1372.26 738.70h3.12v3.12h-3.12zM1390.98 738.70h3.12v3.12h-3.12zM1316.10 741.82h21.84v3.12h-21.84zM1341.06 741.82h3.12v3.12h-3.12zM1347.30 741.82h3.12v3.12h-3.12zM1353.54 741.82h3.12v3.12h-3.12zM1359.78 741.82h3.12v3.12h-3.12zM1366.02 741.82h3.12v3.12h-3.12zM1372.26 741.82h21.84v3.12h-21.84zM1353.54 744.94h15.60v3.12h-15.60zM1316.10 748.06h3.12v3.12h-3.12zM1325.46 748.06h18.72v3.12h-18.72zM1350.42 748.06h3.12v3.12h-3.12zM1359.78 748.06h6.24v3.12h-6.24zM1369.14 748.06h3.12v3.12h-3.12zM1378.50 748.06h3.12v3.12h-3.12zM1384.74 748.06h9.36v3.12h-9.36zM1316.10 751.18h3.12v3.12h-3.12zM1328.58 751.18h6.24v3.12h-6.24zM1337.94 751.18h6.24v3.12h-6.24zM1347.30 751.18h3.12v3.12h-3.12zM1359.78 751.18h6.24v3.12h-6.24zM1375.38 751.18h15.60v3.12h-15.60zM1316.10 754.30h6.24v3.12h-6.24zM1325.46 754.30h12.48v3.12h-12.48zM1350.42 754.30h6.24v3.12h-6.24zM1362.90 754.30h15.60v3.12h-15.60zM1381.62 754.30h3.12v3.12h-3.12zM1390.98 754.30h3.12v3.12h-3.12zM1319.22 757.42h6.24v3.12h-6.24zM1328.58 757.42h3.12v3.12h-3.12zM1337.94 757.42h6.24v3.12h-6.24zM1353.54 757.42h3.12v3.12h-3.12zM1359.78 757.42h3.12v3.12h-3.12zM1366.02 757.42h3.12v3.12h-3.12zM1381.62 757.42h12.48v3.12h-12.48zM1316.10 760.54h6.24v3.12h-6.24zM1325.46 760.54h6.24v3.12h-6.24zM1334.82 760.54h12.48v3.12h-12.48zM1359.78 760.54h9.36v3.12h-9.36zM1372.26 760.54h3.12v3.12h-3.12zM1390.98 760.54h3.12v3.12h-3.12zM1316.10 763.66h6.24v3.12h-6.24zM1325.46 763.66h6.24v3.12h-6.24zM1344.18 763.66h3.12v3.12h-3.12zM1353.54 763.66h3.12v3.12h-3.12zM1359.78 763.66h9.36v3.12h-9.36zM1378.50 763.66h3.12v3.12h-3.12zM1387.86 763.66h3.12v3.12h-3.12zM1316.10 766.78h3.12v3.12h-3.12zM1331.70 766.78h12.48v3.12h-12.48zM1347.30 766.78h3.12v3.12h-3.12zM1359.78 766.78h6.24v3.12h-6.24zM1369.14 766.78h3.12v3.12h-3.12zM1378.50 766.78h15.60v3.12h-15.60zM1316.10 769.90h3.12v3.12h-3.12zM1325.46 769.90h3.12v3.12h-3.12zM1331.70 769.90h3.12v3.12h-3.12zM1337.94 769.90h3.12v3.12h-3.12zM1353.54 769.90h3.12v3.12h-3.12zM1359.78 769.90h3.12v3.12h-3.12zM1369.14 769.90h3.12v3.12h-3.12zM1375.38 769.90h3.12v3.12h-3.12zM1381.62 769.90h6.24v3.12h-6.24zM1390.98 769.90h3.12v3.12h-3.12zM1316.10 773.02h3.12v3.12h-3.12zM1322.34 773.02h6.24v3.12h-6.24zM1331.70 773.02h15.60v3.12h-15.60zM1350.42 773.02h9.36v3.12h-9.36zM1366.02 773.02h15.60v3.12h-15.60zM1384.74 773.02h6.24v3.12h-6.24zM1341.06 776.14h3.12v3.12h-3.12zM1347.30 776.14h6.24v3.12h-6.24zM1366.02 776.14h3.12v3.12h-3.12zM1378.50 776.14h3.12v3.12h-3.12zM1384.74 776.14h6.24v3.12h-6.24zM1316.10 779.26h21.84v3.12h-21.84zM1341.06 779.26h9.36v3.12h-9.36zM1353.54 779.26h3.12v3.12h-3.12zM1359.78 779.26h3.12v3.12h-3.12zM1366.02 779.26h3.12v3.12h-3.12zM1372.26 779.26h3.12v3.12h-3.12zM1378.50 779.26h3.12v3.12h-3.12zM1390.98 779.26h3.12v3.12h-3.12zM1316.10 782.38h3.12v3.12h-3.12zM1334.82 782.38h3.12v3.12h-3.12zM1341.06 782.38h12.48v3.12h-12.48zM1356.66 782.38h3.12v3.12h-3.12zM1362.90 782.38h6.24v3.12h-6.24zM1378.50 782.38h3.12v3.12h-3.12zM1390.98 782.38h3.12v3.12h-3.12zM1316.10 785.50h3.12v3.12h-3.12zM1322.34 785.50h9.36v3.12h-9.36zM1334.82 785.50h3.12v3.12h-3.12zM1341.06 785.50h9.36v3.12h-9.36zM1353.54 785.50h3.12v3.12h-3.12zM1359.78 785.50h21.84v3.12h-21.84zM1316.10 788.62h3.12v3.12h-3.12zM1322.34 788.62h9.36v3.12h-9.36zM1334.82 788.62h3.12v3.12h-3.12zM1347.30 788.62h3.12v3.12h-3.12zM1353.54 788.62h12.48v3.12h-12.48zM1369.14 788.62h6.24v3.12h-6.24zM1387.86 788.62h6.24v3.12h-6.24zM1316.10 791.74h3.12v3.12h-3.12zM1322.34 791.74h9.36v3.12h-9.36zM1334.82 791.74h3.12v3.12h-3.12zM1350.42 791.74h3.12v3.12h-3.12zM1356.66 791.74h3.12v3.12h-3.12zM1366.02 791.74h3.12v3.12h-3.12zM1378.50 791.74h15.60v3.12h-15.60zM1316.10 794.86h3.12v3.12h-3.12zM1334.82 794.86h3.12v3.12h-3.12zM1344.18 794.86h9.36v3.12h-9.36zM1359.78 794.86h3.12v3.12h-3.12zM1372.26 794.86h9.36v3.12h-9.36zM1384.74 794.86h9.36v3.12h-9.36zM1316.10 797.98h21.84v3.12h-21.84zM1341.06 797.98h3.12v3.12h-3.12zM1347.30 797.98h3.12v3.12h-3.12zM1353.54 797.98h3.12v3.12h-3.12zM1366.02 797.98h9.36v3.12h-9.36zM1381.62 797.98h3.12v3.12h-3.12zM1390.98 797.98h3.12v3.12h-3.12z"/>
</svg>
<div class="a quote" style="left:703.5px;top:340px">&ldquo;The greatest expedition</div>
<div class="a quote" style="left:737px;top:424px">you will ever undertake</div>
<div class="a quote" style="left:768px;top:508px">is the journey to self-</div>
<div class="a quote" style="left:837.5px;top:592px">understanding.&rdquo;</div>
<div class="a byline" style="left:753px;top:764px;font-size:38.5px;font-weight:bold">&lsquo;Scotomaville&rsquo;</div><div class="a byline" style="left:1020px;top:767px;font-size:35.7px">by Daniel Comp</div>

<!-- GUIDES -->
<div class="a" style="left:296px;top:105px;width:1px;height:918px;background:#7ee2d8"></div>
<div class="a" style="left:1394px;top:105px;width:1px;height:918px;background:#7ee2d8"></div>
<div class="a" style="left:58px;top:322px;width:1567px;height:1px;background:#7ee2d8"></div>
<div class="a" style="left:58px;top:802px;width:1567px;height:1px;background:#7ee2d8"></div>
<!-- RIGHT DOCK -->
<div class="a" style="left:1642px;top:59px;width:2px;height:981px;background:#3a3a3a"></div>
<div class="a" style="left:1644px;top:59px;width:276px;height:12px;background:#3e3e3e"></div>
<svg style="left:1668px;top:61px" width="8" height="6"><path d="M3.5 0.5L1 3L3.5 5.5M7.5 0.5L5 3L7.5 5.5" fill="none" stroke="#e0e0e0" stroke-width="1.2"/></svg>
<svg style="left:1905px;top:61px" width="8" height="6"><path d="M0.5 0.5L3 3L0.5 5.5M4.5 0.5L7 3L4.5 5.5" fill="none" stroke="#e0e0e0" stroke-width="1.2"/></svg>
<div class="a" style="left:1644px;top:71px;width:37px;height:969px;background:#545454"></div>
<div class="a" style="left:1644px;top:71px;width:37px;height:40px;background:#535353"></div>
<div class="a" style="left:1644px;top:111px;width:37px;height:1px;background:#3a3a3a"></div>
<div class="a" style="left:1644px;top:112px;width:37px;height:68px;background:#535353"></div>
<div class="a" style="left:1644px;top:180px;width:37px;height:1px;background:#3a3a3a"></div>
<svg style="left:1652px;top:74px" width="20" height="4"><path d="M0 2H20" stroke="#434343" stroke-width="3" stroke-dasharray="1 1.3"/></svg>
<svg style="left:1652px;top:115px" width="20" height="4"><path d="M0 2H20" stroke="#434343" stroke-width="3" stroke-dasharray="1 1.3"/></svg>
<div class="a" style="left:1658px;top:86px;width:12px;height:12px;background:#8c8c8c"></div>
<div class="a" style="left:1653px;top:84px;font-size:17px;line-height:20px;font-style:italic;font-family:'Liberation Serif',serif;color:#ececec">fx</div>
<div class="a" style="left:1655px;top:125px;font-size:16px;color:#e0e0e0">A</div>
<div class="a" style="left:1666px;top:127px;width:1px;height:16px;background:#e0e0e0"></div>
<div class="a" style="left:1655px;top:153px;font-size:16px;font-weight:bold;color:#e0e0e0">&para;</div>
<div class="a" style="left:1681px;top:71px;width:3px;height:969px;background:#3a3a3a"></div>

<div class="a" style="left:1684px;top:71px;width:236px;height:969px;background:#535353"></div>
<div class="a" style="left:1919px;top:59px;width:1px;height:981px;background:#3a3a3a"></div>
<!-- tabs -->
<div class="a" style="left:1684px;top:71px;width:235px;height:28px;background:#454545"></div>
<div class="a" style="left:1684px;top:71px;width:47px;height:28px;background:#535353"></div>
<div class="a" style="left:1783px;top:71px;width:1px;height:27px;background:#3c3c3c"></div>
<div class="a" style="left:1849px;top:71px;width:1px;height:27px;background:#3c3c3c"></div>
<div class="a ptab" style="left:1692px;color:#f0f0f0">Layers</div>
<div class="a ptab" style="left:1740px;color:#a6a6a6">History</div>
<div class="a ptab" style="left:1793px;color:#a6a6a6">Navigator</div>
<svg style="left:1904px;top:81px" width="10" height="8"><path d="M0 0.5H10M0 2.5H10M0 4.5H10M0 6.5H10" stroke="#d8d8d8" stroke-width="0.9"/></svg>
<!-- filter row -->
<div class="box" style="left:1688px;top:108px;width:86px;height:19px"></div>
<svg style="left:1696px;top:112px" width="11" height="11"><circle cx="4.5" cy="4.5" r="3.6" fill="none" stroke="#e6e6e6" stroke-width="1.4"/><path d="M7 7L10 10" stroke="#e6e6e6" stroke-width="1.8"/></svg>
<div class="a ptxt" style="left:1710px;top:112.5px;color:#e8e8e8">Kind</div>
<svg style="left:1762px;top:115px" width="8" height="5"><path d="M0.5 0.5L4 4L7.5 0.5" fill="none" stroke="#bdbdbd" stroke-width="1.1"/></svg>
<svg style="left:1785px;top:111px" width="13" height="11"><rect x="0.6" y="0.6" width="11.8" height="9.8" fill="none" stroke="#e6e6e6" stroke-width="1.2"/><path d="M2 9L5 5L7 7L8.5 5.5L11 9Z" fill="#e6e6e6"/></svg>
<svg style="left:1810px;top:111px" width="12" height="12"><circle cx="6" cy="6" r="5.3" fill="none" stroke="#e6e6e6" stroke-width="1.2"/><path d="M10 2L2 10A5.3 5.3 0 0 0 10 2Z" fill="#e6e6e6"/></svg>
<svg style="left:1835px;top:111px" width="13" height="12"><path d="M0.5 0.5H12.5V4H11.5L11 2.2H7.6V10H9.6V11.5H3.4V10H5.4V2.2H2L1.5 4H0.5Z" fill="#e6e6e6"/></svg>
<svg style="left:1859px;top:111px" width="12" height="12"><rect x="1.5" y="1.5" width="9" height="9" fill="none" stroke="#e6e6e6" stroke-width="1.1"/><circle cx="1.5" cy="1.5" r="1.2" fill="#535353" stroke="#e6e6e6" stroke-width="0.8"/><circle cx="10.5" cy="1.5" r="1.2" fill="#535353" stroke="#e6e6e6" stroke-width="0.8"/><circle cx="1.5" cy="10.5" r="1.2" fill="#535353" stroke="#e6e6e6" stroke-width="0.8"/><circle cx="10.5" cy="10.5" r="1.2" fill="#535353" stroke="#e6e6e6" stroke-width="0.8"/></svg>
<svg style="left:1883px;top:111px" width="11" height="12"><path d="M4.5 0.6H8.5L10.4 2.5V10.4H4.5Z" fill="none" stroke="#e6e6e6" stroke-width="1.1"/><rect x="0.5" y="6" width="6" height="5.5" fill="#e6e6e6"/></svg>
<div class="a" style="left:1906px;top:108px;width:9px;height:19px;background:#444;border-radius:5px"></div>
<div class="a" style="left:1906px;top:108px;width:9px;height:9px;background:#e6e6e6;border-radius:50%"></div>
<div class="a" style="left:1684px;top:130px;width:235px;height:1px;background:#474747"></div>
<!-- blend row -->
<div class="box" style="left:1688px;top:136px;width:128px;height:19px"></div>
<div class="a ptxt" style="left:1696px;top:140.5px;color:#e8e8e8">Normal</div>
<svg style="left:1804px;top:143px" width="8" height="5"><path d="M0.5 0.5L4 4L7.5 0.5" fill="none" stroke="#bdbdbd" stroke-width="1.1"/></svg>
<div class="a ptxt" style="left:1823px;top:140.5px;color:#c8c8c8">Opacity:</div>
<div class="box" style="left:1864px;top:136px;width:51px;height:18px;background:#3d3d3d"></div>
<div class="a" style="left:1899px;top:137px;width:1px;height:16px;background:#333"></div>
<div class="a ptxt" style="left:1869px;top:140.5px;color:#f0f0f0">100%</div>
<svg style="left:1903px;top:143px" width="8" height="5"><path d="M0.5 0.5L4 4L7.5 0.5" fill="none" stroke="#bdbdbd" stroke-width="1.1"/></svg>
<div class="a" style="left:1684px;top:158px;width:235px;height:1px;background:#474747"></div>
<!-- lock row -->
<div class="a ptxt" style="left:1690px;top:168.5px;color:#c8c8c8">Lock:</div>
<svg style="left:1723px;top:167px" width="12" height="12"><rect x="0.5" y="0.5" width="11" height="11" fill="#535353" stroke="#e6e6e6" stroke-width="1"/><path d="M1 1h3.3v3.3H1zM7.6 1h3.3v3.3H7.6zM4.3 4.3h3.3v3.3H4.3zM1 7.6h3.3v3.3H1zM7.6 7.6h3.3v3.3H7.6z" fill="#e6e6e6"/></svg>
<svg style="left:1744px;top:166px" width="14" height="14"><path d="M5 9L12.5 1" stroke="#e6e6e6" stroke-width="2" stroke-linecap="round"/><path d="M0.5 13.5C1 11 2.5 8.5 5 9.2C6.3 10.2 5.6 12 4.4 12.8C3.2 13.5 1.6 13.7 0.5 13.5Z" fill="#e6e6e6"/></svg>
<svg style="left:1766px;top:166px" width="14" height="14"><path d="M7 0L9.3 2.3H7.8V6.2H11.7V4.7L14 7L11.7 9.3V7.8H7.8V11.7H9.3L7 14L4.7 11.7H6.2V7.8H2.3V9.3L0 7L2.3 4.7V6.2H6.2V2.3H4.7Z" fill="#e6e6e6"/></svg>
<svg style="left:1788px;top:166px" width="14" height="14"><path d="M3 0V11H14M0 3H11V14M9 3L11 5" fill="none" stroke="#e6e6e6" stroke-width="1.2" stroke-dasharray="2.5 1"/></svg>
<svg style="left:1811px;top:165px" width="12" height="15"><path d="M3 7V4.5A3 3 0 0 1 9 4.5V7" fill="none" stroke="#e6e6e6" stroke-width="1.6"/><rect x="0.5" y="6.5" width="11" height="8" rx="1" fill="#e6e6e6"/><circle cx="6" cy="10.5" r="1.2" fill="#535353"/></svg>
<div class="a ptxt" style="left:1845px;top:168.5px;color:#c8c8c8">Fill:</div>
<div class="box" style="left:1864px;top:164px;width:51px;height:17px;background:#3d3d3d"></div>
<div class="a" style="left:1899px;top:165px;width:1px;height:15px;background:#333"></div>
<div class="a ptxt" style="left:1869px;top:168.5px;color:#f0f0f0">100%</div>
<svg style="left:1903px;top:170px" width="8" height="5"><path d="M0.5 0.5L4 4L7.5 0.5" fill="none" stroke="#bdbdbd" stroke-width="1.1"/></svg>
<div class="a" style="left:1684px;top:187px;width:235px;height:2px;background:#474747"></div>
<!-- layer rows -->
<div class="a" style="left:1684px;top:189px;width:219px;height:181px;background:#535353"></div>
<div class="a" style="left:1713px;top:189px;width:190px;height:25px;background:#6b6b6b"></div>
<div class="a" style="left:1713px;top:189px;width:1px;height:181px;background:#474747"></div>
<div class="a" style="left:1684px;top:214px;width:219px;height:1px;background:#454545"></div>
<div class="a" style="left:1684px;top:240px;width:219px;height:1px;background:#454545"></div>
<div class="a" style="left:1684px;top:266px;width:219px;height:1px;background:#454545"></div>
<div class="a" style="left:1684px;top:291px;width:219px;height:1px;background:#454545"></div>
<div class="a" style="left:1684px;top:317px;width:219px;height:1px;background:#454545"></div>
<div class="a" style="left:1684px;top:343px;width:219px;height:1px;background:#454545"></div>
<div class="a" style="left:1684px;top:369px;width:219px;height:1px;background:#454545"></div>
<!-- eyes -->
<svg style="left:0;top:0" width="1920" height="400">
<g fill="#e6e6e6">
<path id="eye" d="M1692.5 202Q1699.3 195 1706 202Q1699.3 209 1692.5 202Z"/>
<path d="M1692.5 228Q1699.3 221 1706 228Q1699.3 235 1692.5 228Z"/>
<path d="M1692.5 254Q1699.3 247 1706 254Q1699.3 261 1692.5 254Z"/>
<path d="M1692.5 306Q1699.3 299 1706 306Q1699.3 313 1692.5 306Z"/>
<path d="M1692.5 332Q1699.3 325 1706 332Q1699.3 339 1692.5 332Z"/>
</g>
<g fill="#535353"><circle cx="1699.3" cy="202" r="2"/><circle cx="1699.3" cy="228" r="2"/><circle cx="1699.3" cy="254" r="2"/><circle cx="1699.3" cy="306" r="2"/><circle cx="1699.3" cy="332" r="2"/></g>
<g fill="none" stroke="#4a4a4a" stroke-width="1"><rect x="1693.5" y="274.5" width="11" height="11"/><rect x="1693.5" y="352.5" width="11" height="11"/></g>
<path d="M1730 222H1741V225.5H1740L1739.6 223.6H1736.6V232.3H1738.3V233.6H1732.7V232.3H1734.4V223.6H1731.4L1731 225.5H1730Z" fill="#e0e0e0"/>
<path d="M1730 248H1741V251.5H1740L1739.6 249.6H1736.6V258.3H1738.3V259.6H1732.7V258.3H1734.4V249.6H1731.4L1731 251.5H1730Z" fill="#e0e0e0"/>
</svg>
<!-- thumbnails -->
<svg style="left:1716px;top:191px" width="37" height="22"><path d="M0.5 6V0.5H12M25 0.5H36.5V6M36.5 15.5V21.5H25M12 21.5H0.5V15.5" fill="none" stroke="#f4f4f4" stroke-width="1.2"/></svg>
<div class="a" style="left:1718px;top:193px;width:33px;height:18px;background-color:#fff;background-image:linear-gradient(45deg,#cfcfcf 25%,transparent 25%,transparent 75%,#cfcfcf 75%),linear-gradient(45deg,#cfcfcf 25%,transparent 25%,transparent 75%,#cfcfcf 75%);background-size:8px 8px;background-position:0 0,4px 4px;border:1px solid #222"></div>
<div class="a" style="left:1718px;top:271px;width:32px;height:17px;background-color:#fff;background-image:linear-gradient(45deg,#d4d4d4 25%,transparent 25%,transparent 75%,#d4d4d4 75%),linear-gradient(45deg,#d4d4d4 25%,transparent 25%,transparent 75%,#d4d4d4 75%);background-size:8px 8px;background-position:0 0,4px 4px;border:1px solid #222"></div>
<div class="a" style="left:1718px;top:297px;width:32px;height:17px;background-color:#fff;background-image:linear-gradient(45deg,#d4d4d4 25%,transparent 25%,transparent 75%,#d4d4d4 75%),linear-gradient(45deg,#d4d4d4 25%,transparent 25%,transparent 75%,#d4d4d4 75%);background-size:8px 8px;background-position:0 0,4px 4px;border:1px solid #222"></div>
<svg style="left:1721px;top:299px" width="14" height="12"><path d="M1 6Q4 1 7 4Q9 7 12 5M2 9Q5 5 8 8Q10 10 12 8M4 2L6 5" fill="none" stroke="#333" stroke-width="0.9"/></svg>
<div class="a" style="left:1735px;top:272px;width:15px;height:15px;background:#2a2a2a"></div>
<div class="a" style="left:1735px;top:298px;width:15px;height:15px;background:#2a2a2a"></div>
<svg style="left:1737px;top:274px" width="12" height="12"><path d="M5 1H9V4.5H11V10H6V7H5ZM1 8H5V11H1Z" fill="#e8e8e8"/></svg>
<svg style="left:1737px;top:300px" width="12" height="12"><path d="M5 1H9V4.5H11V10H6V7H5ZM1 8H5V11H1Z" fill="#e8e8e8"/></svg>
<div class="a" style="left:1718px;top:324px;width:32px;height:16px;background:#b9a48a;border:1px solid #222"></div>
<div class="a" style="left:1718px;top:350px;width:32px;height:16px;background:#fff;border:1px solid #222"></div>
<div class="a lname" style="left:1759px;top:197.5px">qr-code</div>
<div class="a lname" style="left:1759px;top:223.5px">'Scotomavill... Daniel Comp</div>
<div class="a lname" style="left:1759px;top:249.5px">"The greatest ...ertake &nbsp; &nbsp; is</div>
<div class="a lname" style="left:1759px;top:275.5px">KioskBanner-...24-300dpi-w</div>
<div class="a lname" style="left:1759px;top:301.5px">Scotomaville...4x24-300dpi</div>
<div class="a lname" style="left:1759px;top:327.5px">Layer 1</div>
<div class="a lname" style="left:1759px;top:353.5px">Layer 0</div>
<!-- footer -->
<div class="a" style="left:1684px;top:1013px;width:235px;height:1px;background:#474747"></div>
<svg style="left:0;top:1000px" width="1920" height="40">
<g fill="none" stroke="#8c8c8c" stroke-width="1.2"><rect x="1717.5" y="23.5" width="7" height="5" rx="2.5"/><rect x="1723.5" y="23.5" width="7" height="5" rx="2.5"/></g>
<text x="1745" y="33" font-family="Liberation Serif" font-style="italic" font-size="14" fill="#e0e0e0">fx</text>
<path d="M1757 34h4l-2 2z" fill="#e0e0e0"/>
<rect x="1771" y="21" width="13" height="10" fill="#e0e0e0"/><circle cx="1777.5" cy="26" r="2.8" fill="#535353"/>
<circle cx="1805" cy="27" r="5.5" fill="none" stroke="#e0e0e0" stroke-width="1.2"/><path d="M1809 23L1801 31A5.5 5.5 0 0 0 1809 23Z" fill="#e0e0e0"/>
<path d="M1810 34h4l-2 2z" fill="#e0e0e0"/>
<path d="M1826 21H1831L1832 22.5H1838V33H1826Z" fill="#e0e0e0"/>
<rect x="1854.5" y="21.5" width="11" height="11" fill="none" stroke="#e0e0e0" stroke-width="1.1"/><path d="M1860 24V30M1857 27H1863" stroke="#e0e0e0" stroke-width="1.2"/>
<path d="M1880 23H1891M1884 23V21H1887V23M1881.5 24V33H1889.5V24M1884 25.5V31.5M1886.5 25.5V31.5" fill="none" stroke="#e0e0e0" stroke-width="1.1"/>
</svg>
<!-- TASKBAR -->
<div class="a" style="left:0;top:1040px;width:1920px;height:40px;background:#101010"></div>
<svg style="left:0;top:1040px" width="1920" height="40">
<path d="M16 13.2L22.9 12.2V19.3H16ZM23.9 12L32.5 10.8V19.3H23.9ZM16 20.3H22.9V27.3L16 26.3ZM23.9 20.3H32.5V28.7L23.9 27.5Z" fill="#fff"/>
<!-- explorer -->
<path d="M64 11H71.5L73.5 13.5H85V28H64Z" fill="#e9a92a"/><path d="M64 15H85V28H64Z" fill="#ffd45c"/><path d="M68.5 21.5H80.5V28.5H77V24.5H72V28.5H68.5Z" fill="#2f8ad8"/>
<!-- zoom -->
<rect x="113" y="9" width="22.5" height="22.5" rx="7" fill="#2d8cff"/><rect x="117" y="16.5" width="9.5" height="7.5" rx="1.8" fill="#fff"/><path d="M127.5 19.2L131.5 16.8V23.7L127.5 21.3Z" fill="#fff"/>
<!-- firefox -->
<circle cx="172.5" cy="20.5" r="11" fill="#ff6a2b"/><circle cx="172.5" cy="20.5" r="11" fill="url(#ffg)"/><circle cx="171.5" cy="21" r="4.6" fill="#6b3fd8"/><path d="M168 10Q176 6 181 13Q184 19 182 24" stroke="#ffc43a" stroke-width="3.2" fill="none"/>
<defs><radialGradient id="ffg" cx="0.6" cy="0.2" r="0.9"><stop offset="0" stop-color="#ffd43a"/><stop offset="0.5" stop-color="#ff7a2a" stop-opacity="0.6"/><stop offset="1" stop-color="#e2336c" stop-opacity="0.45"/></radialGradient></defs>
<!-- ps -->
<rect x="211" y="8.5" width="21.5" height="21.5" rx="3" fill="#001e36"/><text x="213.3" y="24" font-family="Liberation Sans" font-weight="bold" font-size="11.5" fill="#31a8ff">Ps</text>
<!-- snip -->
<rect x="247" y="0" width="47" height="38" fill="#2b2b2b"/>
<path d="M262.5 17A9.5 9.5 0 1 1 279.5 22" fill="none" stroke="#e2592a" stroke-width="3"/><path d="M269.5 10.5L271.5 26M277 15.5L270.5 25.5" stroke="#d8d8d8" stroke-width="2"/>
<circle cx="265.5" cy="27.5" r="2.8" fill="none" stroke="#3aa0ea" stroke-width="2"/><circle cx="274" cy="29" r="2.8" fill="none" stroke="#3aa0ea" stroke-width="2"/>
<!-- underlines -->
<path d="M55 38.5H95M153 38.5H193M202 38.5H242M247 38.5H294" stroke="#9a9a9a" stroke-width="3"/>
<!-- tray -->
<path d="M1713 22L1719 16L1725 22" fill="none" stroke="#fff" stroke-width="1.2"/>
<rect x="1738.5" y="17.5" width="11" height="7" fill="none" stroke="#fff" stroke-width="1.1"/><rect x="1740" y="19" width="8" height="4" fill="#fff"/><path d="M1750 19.5V22.5" stroke="#fff" stroke-width="1.2"/><path d="M1736 15V20M1735 16.5H1738" stroke="#fff" stroke-width="1"/>
<path d="M1762 25A12 12 0 0 1 1774 15M1765 25A9 9 0 0 1 1774 17.8M1768 25A6 6 0 0 1 1774 20.6" fill="none" stroke="#fff" stroke-width="1.1"/><circle cx="1772.5" cy="24" r="1.3" fill="#fff"/>
<path d="M1783 18.5H1786L1790 15V27L1786 23.5H1783Z" fill="none" stroke="#fff" stroke-width="1.1"/><path d="M1792 18.5Q1794 21 1792 23.5M1794 16.5Q1797.5 21 1794 25.5" fill="none" stroke="#fff" stroke-width="1.1"/><path d="M1797 14Q1801 21 1797 28" fill="none" stroke="#888" stroke-width="1"/>
<text x="1835" y="15.5" text-anchor="middle" font-family="Liberation Sans" font-size="12" fill="#fff">11:13 AM</text>
<text x="1835" y="33" text-anchor="middle" font-family="Liberation Sans" font-size="12" fill="#fff">4/21/2021</text>
<path d="M1879 12H1895V26H1889L1887 28.5L1885 26H1879Z" fill="#fff"/><path d="M1882 15.5H1892M1882 18.5H1892M1882 21.5H1889" stroke="#101010" stroke-width="1"/>
<path d="M1916.5 0V40" stroke="#4a4a4a" stroke-width="1"/>
</svg>
</body></html>
